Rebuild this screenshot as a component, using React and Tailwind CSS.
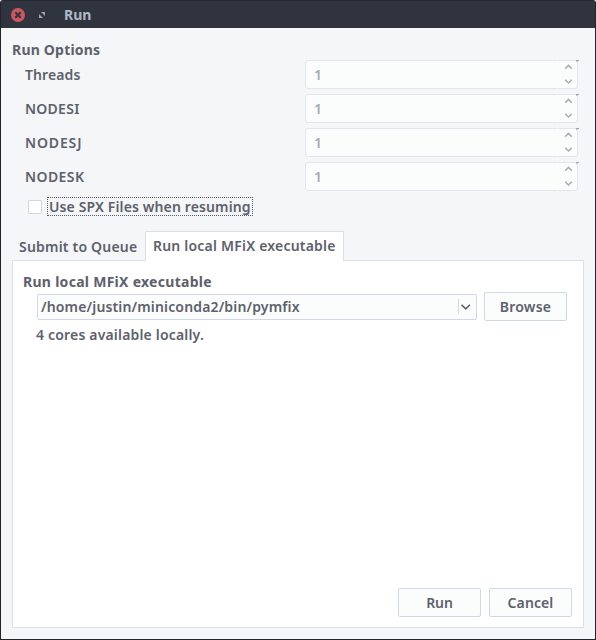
import React from "react";

function SpinRow({ label, tracking }) {
  return (
    <div className="flex h-[29px] items-center">
      <span className={"w-[280px] shrink-0 " + tracking}>{label}</span>
      <div className="relative flex h-[29px] w-[273px] rounded-[3px] border border-[#e1e5ee] bg-[#fbfdfc]">
        <span className="flex-1 pl-[8px] leading-[27px] text-[#a9abb3]">1</span>
        <svg className="h-[27px] w-[20px]" viewBox="0 0 20 27" fill="none" stroke="#a9abb2" strokeWidth="1.5">
          <path d="M8.2 7.7 11.5 4.4 14.8 7.7M8.2 18.7 11.5 22 14.8 18.7" />
        </svg>
        <i className="absolute -top-px right-[19px] h-px w-px bg-[#f5f6f8]" />
        <i className="absolute right-[19px] -bottom-px h-px w-px bg-[#f5f6f8]" />
        <i className="absolute -top-px -right-[2px] h-px w-[3px] bg-[#a3a8ae]" />
        <i className="absolute top-0 -right-px h-px w-[2px] bg-[#c5c9d0]" />
      </div>
    </div>
  );
}

function Button({ children, tracking }) {
  return (
    <button className={"h-[29px] w-[83px] rounded-[2px] border border-[#cfd6e6] bg-[#fbfdfc] text-center leading-[27px] " + tracking}>
      {children}
    </button>
  );
}

export default function App() {
  return (
    <div className="h-[640px] w-[596px] overflow-hidden bg-white font-['Noto_Sans',sans-serif] text-[14px] leading-[20px] font-semibold whitespace-nowrap text-[#5c616c]">
      <div className="flex h-full flex-col rounded-t-[3px] border border-t-0 border-[#23232c] bg-[#f5f6f8]">
        <header className="flex h-[28px] shrink-0 items-center rounded-t-[2px] border-t border-[#262933] bg-[#2f343f] pl-[10px]">
          <svg className="size-[14px]" viewBox="0 0 14 14">
            <circle cx="7" cy="7" r="7" fill="#cc575d" />
            <path d="M4.3 4.3 9.7 9.7M9.7 4.3 4.3 9.7" stroke="#2f343f" strokeWidth="2" />
          </svg>
          <svg className="ml-[14px] size-[6px]" viewBox="0 0 6 6" fill="#a0a5b0">
            <path d="M2 0H6V4ZM0 2V6H4Z" />
          </svg>
          <span className="ml-[19px] pt-px font-bold tracking-[0px] text-[#afb8c5]">Run</span>
        </header>

        <main className="flex flex-1 flex-col px-[11px] pt-[12px] pb-[11px]">
          <h1 className="h-[20px] font-bold tracking-[0.2px]">Run Options</h1>
          <div className="flex flex-col gap-[5px] pl-[13px]">
            <SpinRow label="Threads" tracking="tracking-[0.1px]" />
            <SpinRow label="NODESI" tracking="tracking-[0.25px]" />
            <SpinRow label="NODESJ" tracking="tracking-[0.85px]" />
            <SpinRow label="NODESK" tracking="tracking-[0.4px]" />
          </div>
          <label className="mt-[6px] flex h-[19px] items-center pl-[16px]">
            <span className="size-[14px] rounded-[1px] border border-[#cfd6e6] bg-white" />
            <span className="ml-[5px] h-[19px] w-[206px] border border-dotted border-[#555a64] pl-px leading-[18px] tracking-[0.13px]">
              Use SPX Files when resuming
            </span>
          </label>

          <div className="mt-[15px] flex h-[29px] items-start">
            <div className="h-[29px] w-[133px] pl-[7px] leading-[32px] tracking-[0.2px]">Submit to Queue</div>
            <div className="relative z-10 h-[30px] w-[199px] border border-b-0 border-[#dce0e6] bg-white pl-[7px] leading-[28px] tracking-[0.21px]">
              Run local MFiX executable
            </div>
          </div>
          <section className="flex flex-1 flex-col border border-[#dce0e6] bg-white pt-[11px] pr-[11px] pb-[10px] pl-[10px]">
            <h2 className="h-[20px] font-bold tracking-[0.28px]">Run local MFiX executable</h2>
            <div className="flex items-center pl-[14px]">
              <div className="flex h-[26px] w-[440px] items-center rounded-[2px] border border-[#cfd6e6] bg-[#fbfdfc] pl-[3px]">
                <span className="flex-1 tracking-[0.15px]">/home/justin/miniconda2/bin/pymfix</span>
                <span className="h-[15px] w-px bg-[#d5d8dd]" />
                <svg className="h-[16px] w-[17px]" viewBox="0 0 17 16" fill="none" stroke="#5c616c" strokeWidth="1.6">
                  <path d="M2.5 5.7 6.7 9.9 10.9 5.7" />
                </svg>
              </div>
              <div className="ml-[7px]"><Button tracking="tracking-[0.2px]">Browse</Button></div>
            </div>
            <p className="mt-[4px] pl-[13px] tracking-[0.18px]">4 cores available locally.</p>
            <div className="mt-auto flex justify-end gap-[8px]">
              <Button tracking="tracking-[-0.1px]">Run</Button>
              <Button tracking="tracking-[0.1px]">Cancel</Button>
            </div>
          </section>
        </main>
      </div>
    </div>
  );
}
